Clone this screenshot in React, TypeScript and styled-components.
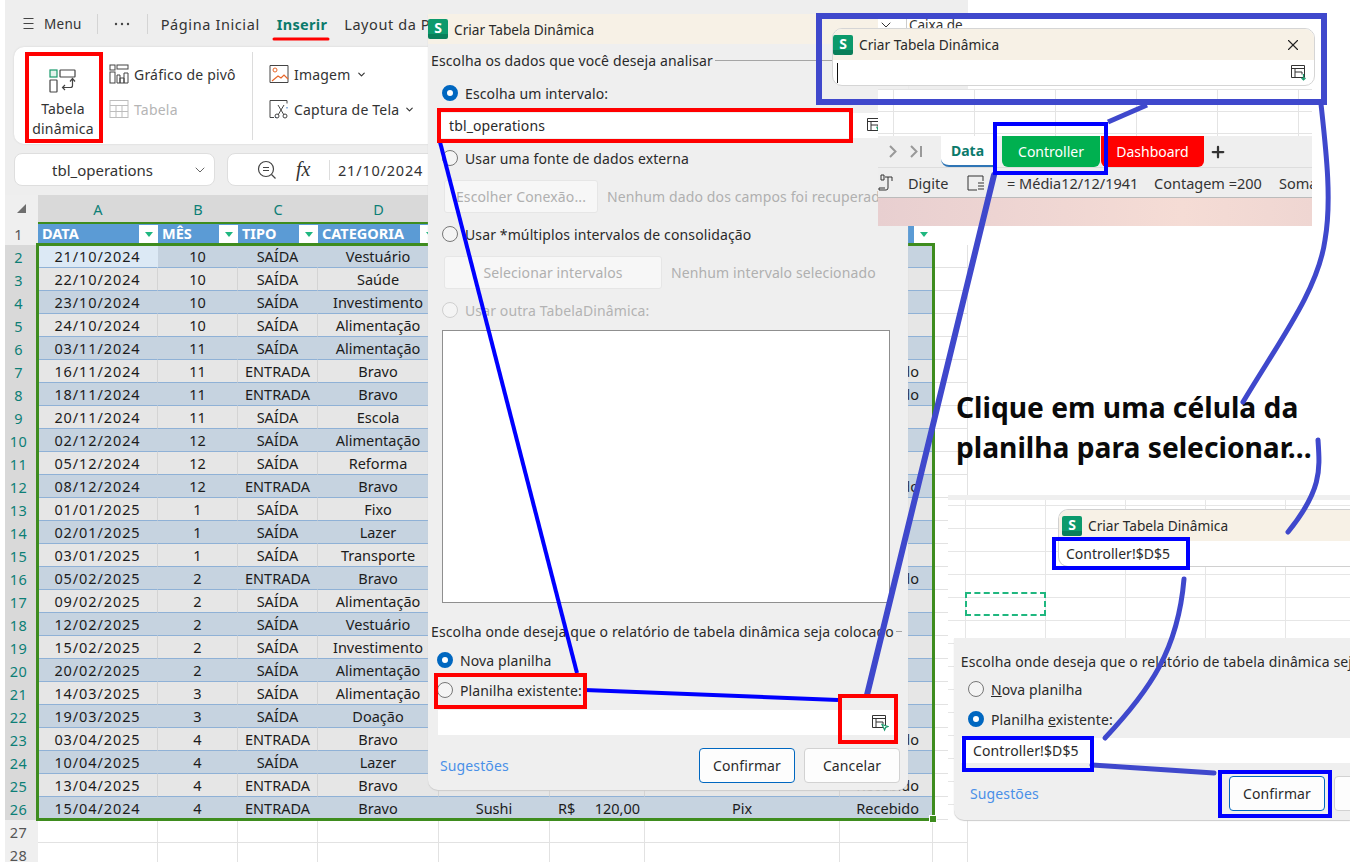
import React from "react";
import styled, { createGlobalStyle } from "styled-components";
import { ChevronDown, Plus, X } from "lucide-react";

const Global = createGlobalStyle`
  html, body { margin: 0; padding: 0; background: #fff; }
  body { font-family: "Noto Sans", "Liberation Sans", sans-serif; color: #222; }
  * { box-sizing: border-box; }
`;

const Canvas = styled.div`
  position: relative;
  width: 1350px;
  height: 862px;
  overflow: hidden;
  background: #fff;
`;

/* ---------- main spreadsheet window ---------- */
const Main = styled.div`
  margin-left: 5px;
  width: 963px;
  height: 862px;
  background: #eeeeee;
  display: flex;
  flex-direction: column;
`;
const Toolbar = styled.div`
  height: 47px;
  padding: 0 0 0 18px;
  display: flex;
  align-items: center;
  font-size: 14.5px;
  letter-spacing: 0.6px;
  color: #333;
  white-space: nowrap;
`;
const MenuLabel = styled.span`
  margin-left: 10px;
  font-size: 13.5px;
  letter-spacing: 0.3px;
`;
const ToolSep = styled.span<{ $l?: number; $r?: number }>`
  width: 1px;
  height: 20px;
  background: #d4d4d4;
  margin: 0 ${(p) => p.$r ?? 15}px 0 ${(p) => p.$l ?? 15}px;
`;
const Tab = styled.span<{ $active?: boolean }>`
  margin-right: 17px;
  font-weight: ${(p) => (p.$active ? 700 : 400)};
  letter-spacing: ${(p) => (p.$active ? "0.3px" : "0.6px")};
  color: ${(p) => (p.$active ? "#0b7a6b" : "#333")};
`;
const Ribbon = styled.div`
  margin-left: 9px;
  width: 500px;
  height: 97px;
  background: #fff;
  border-radius: 10px;
  box-shadow: 0 0 2px #cfcfcf;
  display: flex;
  align-items: stretch;
  padding: 5px 0 4px 10px;
  font-size: 14px;
  letter-spacing: 0.2px;
  color: #333;
`;
const BigButton = styled.div`
  width: 78px;
  display: flex;
  flex-direction: column;
  align-items: center;
  padding-top: 17px;
  line-height: 20px;
  text-align: center;
  svg { margin-bottom: 5px; }
`;
const RibbonCol = styled.div<{ $w: number }>`
  width: ${(p) => p.$w}px;
  padding-left: 7px;
  padding-top: 12px;
  display: flex;
  flex-direction: column;
  gap: 15px;
`;
const RibbonItem = styled.div<{ $off?: boolean }>`
  height: 20px;
  display: flex;
  align-items: center;
  gap: 5px;
  white-space: nowrap;
  color: ${(p) => (p.$off ? "#b5b5b5" : "#333")};
`;
const RibbonSep = styled.div`
  width: 1px;
  background: #dcdcdc;
  margin-right: 9px;
`;
const FormulaRow = styled.div`
  margin: 9px 0 9px 9px;
  height: 33px;
  display: flex;
  gap: 12px;
`;
const NameBox = styled.div`
  width: 201px;
  background: #fff;
  border: 1px solid #dedede;
  border-radius: 8px;
  display: flex;
  align-items: center;
  font-size: 15px;
  padding: 0 6px 0 37px;
  justify-content: space-between;
  color: #333;
`;
const FormulaBox = styled.div`
  flex: 1;
  background: #fff;
  border: 1px solid #dedede;
  border-radius: 8px;
  display: flex;
  align-items: center;
  padding-left: 29px;
  font-size: 14.5px;
  letter-spacing: 0.8px;
  color: #333;
`;
const Fx = styled.span`
  font-family: "Liberation Serif", serif;
  font-style: italic;
  font-size: 20px;
  margin-left: 19px;
  width: 33px;
  letter-spacing: 0;
`;
const FormulaSep = styled.span`
  width: 1px;
  height: 20px;
  background: #ddd;
  margin-right: 8px;
`;

/* ---------- grid ---------- */
const COLS = "33px 120px 80px 80px 121px 111px 95px 195px 93px 35px";
const Sheet = styled.div`
  position: relative;
  flex: 1;
  background: #fff;
  overflow: hidden;
`;
const Row = styled.div<{ $h?: number }>`
  display: grid;
  grid-template-columns: ${COLS};
  height: ${(p) => p.$h ?? 23}px;
`;
const RowNum = styled.div<{ $on?: boolean }>`
  background: ${(p) => (p.$on ? "#d9d9d9" : "#efefef")};
  color: ${(p) => (p.$on ? "#0d7f76" : "#555")};
  display: flex;
  align-items: center;
  justify-content: center;
  font-size: 14.5px;
  letter-spacing: 0.4px;
  padding-right: 6px;
`;
const ColHead = styled.div<{ $off?: boolean }>`
  background: ${(p) => (p.$off ? "#efefef" : "#d9d9d9")};
  color: #0d7f76;
  display: flex;
  align-items: center;
  justify-content: center;
  font-size: 14.5px;
`;
const Corner = styled.div`
  background: #efefef;
  display: flex;
  align-items: center;
  justify-content: center;
`;
const HeadCell = styled.div<{ $plain?: boolean }>`
  position: relative;
  background: ${(p) => (p.$plain ? "#fff" : "#5b9bd5")};
  border-top: ${(p) => (p.$plain ? "1px solid #e2e2e2" : "2px solid #3e8c1e")};
  color: #fff;
  font-weight: 700;
  font-size: 14.5px;
  padding-left: 4px;
  line-height: 19px;
  white-space: nowrap;
`;
const Filter = styled.span`
  position: absolute;
  right: 0;
  top: 1px;
  width: 19px;
  height: 19px;
  background: #fff;
  display: flex;
  align-items: center;
  justify-content: center;
  &::after {
    content: "";
    border-left: 4px solid transparent;
    border-right: 4px solid transparent;
    border-top: 5px solid #1fb77f;
  }
`;
const Cell = styled.div<{ $band?: boolean; $sel?: boolean; $right?: boolean; $free?: boolean }>`
  background: ${(p) =>
    p.$free ? "#fff" : p.$sel ? "#dce9f5" : p.$band ? "#c6d3e0" : "#e6e6e6"};
  border-bottom: 1px solid ${(p) => (p.$free ? "#e2e2e2" : "#8fb1d6")};
  border-right: 1px solid ${(p) => (p.$free ? "#e2e2e2" : p.$band ? "transparent" : "#d4d4d4")};
  display: flex;
  align-items: center;
  justify-content: ${(p) => (p.$right ? "flex-end" : "center")};
  padding-right: ${(p) => (p.$right ? 13 : 0)}px;
  padding-bottom: 1px;
  font-size: 14.5px;
  color: #1c1c1c;
  white-space: nowrap;
  overflow: hidden;
`;
const DateCell = styled(Cell)`
  letter-spacing: 0.9px;
`;
const MoneyCell = styled(Cell)`
  justify-content: space-between;
  padding: 0 4px 1px 8px;
`;
const Selection = styled.div`
  position: absolute;
  left: 31px;
  top: 48px;
  width: 899px;
  height: 578px;
  border: 3px solid #3e8c1e;
  pointer-events: none;
  &::after {
    content: "";
    position: absolute;
    right: -5px;
    bottom: -5px;
    width: 6px;
    height: 6px;
    background: #3e8c1e;
    border: 1px solid #fff;
  }
`;

/* ---------- pivot dialog ---------- */
const Dialog = styled.div`
  position: absolute;
  left: 428px;
  top: 14px;
  width: 480px;
  height: 776px;
  background: #efefef;
  border-radius: 0 0 10px 10px;
  box-shadow: 0 1px 1px #ccc;
  display: flex;
  flex-direction: column;
  font-size: 14px;
  letter-spacing: 0.12px;
  color: #2a2a2a;
  white-space: nowrap;
`;
const TitleBar = styled.div`
  height: 30px;
  background: #f7f1e6;
  display: flex;
  align-items: center;
  gap: 5px;
  font-size: 13.7px;
  letter-spacing: 0;
`;
const Logo = styled.span`
  position: relative;
  flex: none;
  width: 20px;
  height: 20px;
  border-radius: 2px;
  background: linear-gradient(#0c9a6c 75%, #0a7f5a 75%);
  color: #fff;
  font-weight: 700;
  font-size: 14px;
  line-height: 17px;
  text-align: center;
  margin-right: 1px;
`;
const Legend = styled.div<{ $top: number }>`
  margin-top: ${(p) => p.$top}px;
  padding: 0 0 2px 3px;
  height: 20px;
  display: flex;
  align-items: center;
  gap: 2px;
`;
const LegendLine = styled.span`
  flex: 1;
  height: 1px;
  background: #a5a5a5;
  margin-right: 6px;
`;
const RadioRow = styled.div<{ $top: number; $left?: number; $off?: boolean }>`
  margin-top: ${(p) => p.$top}px;
  padding-left: ${(p) => p.$left ?? 14}px;
  height: 20px;
  display: flex;
  align-items: center;
  gap: 7px;
  color: ${(p) => (p.$off ? "#b3b3b3" : "#2a2a2a")};
`;
const Radio = styled.span<{ $on?: boolean; $off?: boolean }>`
  flex: none;
  width: 16px;
  height: 16px;
  border-radius: 50%;
  background: ${(p) => (p.$on ? "#fff" : "#f4f4f4")};
  border: ${(p) =>
    p.$on ? "5px solid #0067c0" : p.$off ? "1px solid #cfcfcf" : "1px solid #777"};
`;
const InputRow = styled.div<{ $top: number; $pr: number }>`
  margin: ${(p) => p.$top}px 0 0 10px;
  height: 25px;
  width: 458px;
  background: #fff;
  display: flex;
  align-items: center;
  justify-content: space-between;
  padding: 0 ${(p) => p.$pr}px 0 11px;
  font-size: 14px;
`;
const DisabledRow = styled.div`
  margin: 12px 0 0 16px;
  height: 33px;
  display: flex;
  align-items: center;
  gap: 9px;
  color: #b0b0b0;
`;
const DisabledBtn = styled.div<{ $w: number }>`
  width: ${(p) => p.$w}px;
  height: 33px;
  background: #f7f7f7;
  border: 1px solid #e6e6e6;
  border-radius: 3px;
  display: flex;
  align-items: center;
  justify-content: center;
  overflow: hidden;
`;
const ListBox = styled.div`
  margin: 10px 0 0 14px;
  width: 448px;
  height: 273px;
  background: #fff;
  border: 1px solid #8f8f8f;
`;
const FooterRow = styled.div`
  margin-top: 13px;
  padding: 0 8px 0 12px;
  display: flex;
  align-items: center;
  gap: 9px;
`;
const Link = styled.span`
  color: #4a90e8;
  flex: 1;
`;
const Btn = styled.div<{ $primary?: boolean }>`
  width: 96px;
  height: 35px;
  background: #fdfdfd;
  border: 1px solid ${(p) => (p.$primary ? "#0067c0" : "#d2d2d2")};
  border-radius: 4px;
  display: flex;
  align-items: center;
  justify-content: center;
`;

/* ---------- pasted clips on the right ---------- */
const CaixaClip = styled.div`
  position: absolute;
  left: 878px;
  top: 15px;
  width: 90px;
  height: 20px;
  background: #fff;
  display: flex;
  align-items: center;
  gap: 12px;
  font-size: 13.5px;
  color: #333;
  overflow: hidden;
  span { border-left: 1px solid #ccc; padding-left: 2px; white-space: nowrap; }
`;
const TabsClip = styled.div`
  position: absolute;
  left: 878px;
  top: 89px;
  width: 434px;
  height: 137px;
  display: flex;
  flex-direction: column;
  overflow: hidden;
`;
const ClipGrid = styled.div`
  height: 47px;
  background-color: #fff;
  background-image:
    linear-gradient(#e4e4e4 1px, transparent 1px),
    linear-gradient(90deg, #e4e4e4 1px, transparent 1px);
  background-size: 81px 22px;
  background-position: 15px 0;
`;
const SheetTabs = styled.div`
  height: 32px;
  background: #efefef;
  display: flex;
  align-items: stretch;
  font-size: 14px;
  border-bottom: 1px solid #ddd;
`;
const NavArrows = styled.div`
  width: 63px;
  padding-left: 11px;
  display: flex;
  align-items: center;
  gap: 13px;
  svg { display: block; }
`;
const DataTab = styled.div`
  width: 53px;
  background: #fff;
  border-radius: 0 0 0 8px;
  font-weight: 700;
  color: #0b7a6b;
  display: flex;
  align-items: center;
  justify-content: center;
  border-bottom: 2px solid #2f75b5;
  margin-right: 8px;
`;
const ColorTab = styled.div<{ $bg: string; $w: number }>`
  width: ${(p) => p.$w}px;
  background: ${(p) => p.$bg};
  color: #fff;
  border-radius: 0 0 6px 6px;
  display: flex;
  align-items: center;
  justify-content: center;
  margin-right: 1px;
`;
const AddTab = styled.div`
  margin-left: 4px;
  display: flex;
  align-items: center;
  color: #333;
`;
const StatusBar = styled.div`
  height: 30px;
  background: #eeeeee;
  border-bottom: 1px solid #bbb;
  display: flex;
  align-items: center;
  font-size: 14.5px;
  color: #333;
  white-space: nowrap;
  svg { flex: none; }
`;
const StatusText = styled.span<{ $w: number }>`
  width: ${(p) => p.$w}px;
  flex: none;
`;
const Blush = styled.div`
  flex: 1;
  background: linear-gradient(90deg, #e8cfd0, #f5dcd5 70%, #efd6d2);
`;
const MiniDialog = styled.div`
  position: absolute;
  left: 832px;
  top: 28px;
  width: 483px;
  height: 58px;
  background: #fff;
  border: 1px solid #d5d5d5;
  border-radius: 10px;
  overflow: hidden;
  display: flex;
  flex-direction: column;
  font-size: 13.7px;
  color: #2a2a2a;
`;
const MiniTitle = styled.div<{ $left: number }>`
  height: 31px;
  flex: none;
  background: #f7f1e6;
  display: flex;
  align-items: center;
  gap: 5px;
  padding: 0 12px 0 ${(p) => p.$left}px;
`;
const MiniSpacer = styled.span`
  flex: 1;
`;
const MiniInput = styled.div`
  flex: 1;
  display: flex;
  align-items: center;
  justify-content: space-between;
  padding: 0 6px 0 4px;
`;
const Caret = styled.span`
  width: 1px;
  height: 20px;
  background: #111;
`;
const BigNote = styled.div`
  position: absolute;
  left: 956px;
  top: 387px;
  width: 380px;
  font-size: 28.2px;
  line-height: 40px;
  font-weight: 700;
  color: #0a0a0a;
  white-space: nowrap;
`;
const LowerClip = styled.div`
  position: absolute;
  left: 948px;
  top: 495px;
  width: 402px;
  height: 325px;
  background-color: #fff;
  background-image:
    linear-gradient(#e6e6e6 1px, transparent 1px),
    linear-gradient(90deg, #e6e6e6 1px, transparent 1px);
  background-size: 80px 23px;
  background-position: 17px 5px;
  border-top: 5px solid #efefef;
`;
const MiniDialogB = styled.div`
  position: absolute;
  left: 110px;
  top: 9px;
  width: 292px;
  height: 58px;
  background: #fff;
  border: 1px solid #d0d0d0;
  border-right: 0;
  border-radius: 10px 0 0 10px;
  overflow: hidden;
  font-size: 13.7px;
  color: #2a2a2a;
`;
const MiniInputB = styled.div`
  height: 25px;
  padding-left: 7px;
  display: flex;
  align-items: center;
  font-size: 14px;
`;
const DashedCell = styled.div`
  position: absolute;
  left: 17px;
  top: 92px;
  width: 81px;
  height: 24px;
  border: 2px dashed #1fb77f;
`;
const LowerDialog = styled.div`
  position: absolute;
  left: 6px;
  top: 138px;
  width: 396px;
  height: 182px;
  background: #efefef;
  border-radius: 0 0 0 10px;
  box-shadow: 0 1px 1px #ccc;
  display: flex;
  flex-direction: column;
  font-size: 14px;
  letter-spacing: 0.12px;
  color: #2a2a2a;
  white-space: nowrap;
  overflow: hidden;
`;
const LowerInput = styled.div`
  margin: 9px 0 0 7px;
  height: 25px;
  background: #fff;
  padding-left: 12px;
  display: flex;
  align-items: center;
`;
const LowerFooter = styled.div`
  margin-top: 13px;
  padding-left: 16px;
  display: flex;
  align-items: center;
  gap: 9px;
  width: 500px;
`;
const LowerLink = styled(Link)`
  flex: none;
  width: 250px;
`;
const Overlay = styled.svg`
  position: absolute;
  left: 0;
  top: 0;
  pointer-events: none;
`;

/* ---------- drawings ---------- */
const RangeIcon = ({ down }: { down?: boolean }) => (
  <svg width="18" height="18" viewBox="0 0 18 18" fill="none">
    <path d="M1.5 1.5h13v12h-13z M1.5 4.5h13 M5 4.5v9 M5 8h7v2.5" stroke="#333" strokeWidth="1" />
    {down ? (
      <path d="M13.5 10v6m-2-2 2 2 2-2" stroke="#1a9a6c" strokeWidth="1.2" />
    ) : (
      <path d="M11 10.5l6 2-2.4 1-1 2.5z" fill="#fff" stroke="#1a9a6c" strokeWidth="1.2" />
    )}
  </svg>
);
const PivotIcon = () => (
  <svg width="28" height="25" viewBox="0 0 28 25" fill="none">
    <rect x="1" y="1" width="7" height="7" stroke="#1a9a6c" strokeWidth="1.2" fill="#e4f3ec" />
    <rect x="11" y="1" width="15" height="7" stroke="#444" strokeWidth="1.2" rx="0.5" />
    <rect x="1" y="11" width="7" height="12" stroke="#444" strokeWidth="1.2" rx="0.5" />
    <path d="M23.5 10v6.5a2 2 0 0 1-2 2h-7.5" stroke="#444" strokeWidth="1.2" />
    <path d="M21 12.5l2.5-3 2.5 3M16 16l-2.5 2.5L16 21" stroke="#444" strokeWidth="1.2" />
  </svg>
);
const ChartPivotIcon = () => (
  <svg width="20" height="20" viewBox="0 0 20 20" fill="none" stroke="#444">
    <rect x="1" y="1" width="5" height="5" />
    <rect x="8" y="1" width="11" height="4" />
    <rect x="1" y="8" width="5" height="11" />
    <path d="M8 19v-8h3v8M11 19v-5h4v5M15 19V9h4v10M8 19h11" />
  </svg>
);
const TableIcon = () => (
  <svg width="20" height="20" viewBox="0 0 20 20" fill="none" stroke="#bdbdbd">
    <rect x="1" y="1.5" width="18" height="17" />
    <path d="M1 6.5h18M1 12.5h18M7 7v11M13 7v11" />
  </svg>
);
const ImageIcon = () => (
  <svg width="20" height="20" viewBox="0 0 20 20" fill="none">
    <path d="M1 18.5v-17h18v17" stroke="#444" />
    <path d="M1 18.5h18" stroke="#444" />
    <path d="M3 17l6-5 3 2 3-3 4 4" stroke="#e8672a" strokeWidth="1.2" />
    <circle cx="6" cy="6" r="2" stroke="#e8672a" />
  </svg>
);
const CaptureIcon = () => (
  <svg width="20" height="20" viewBox="0 0 20 20" fill="none">
    <path d="M5 18.5H1v-17h17v3" stroke="#444" />
    <path d="M18 8v3M6 18.5h2" stroke="#2a6fc0" strokeDasharray="1.5 1.5" />
    <path d="M15 6l-6 10M9 6l6 10" stroke="#444" />
    <circle cx="8" cy="17" r="2" stroke="#444" />
    <circle cx="16" cy="17" r="2" stroke="#444" />
  </svg>
);
const HamburgerIcon = () => (
  <svg width="11" height="13" viewBox="0 0 11 13" stroke="#444">
    <path d="M0.5 1.5h10M0.5 6.5h10M0.5 11.5h10" />
  </svg>
);
const ZoomIcon = () => (
  <svg width="20" height="20" viewBox="0 0 20 20" fill="none" stroke="#444" strokeWidth="1.2">
    <circle cx="9" cy="9" r="7.5" />
    <path d="M6 7.5h6M6 10.5h6M14.5 14.5l4 4" />
  </svg>
);
const CornerTriangle = () => (
  <svg width="9" height="9" viewBox="0 0 9 9">
    <path d="M9 0v9H0z" fill="#6e6e6e" />
  </svg>
);
const ChevronRightIcon = () => (
  <svg width="8" height="13" viewBox="0 0 8 13" fill="none" stroke="#999" strokeWidth="2">
    <path d="M1 1l5.5 5.5L1 12" />
  </svg>
);
const ChevronLastIcon = () => (
  <svg width="12" height="13" viewBox="0 0 12 13" fill="none" stroke="#999" strokeWidth="2">
    <path d="M1 1l5.5 5.5L1 12M11 1v11" />
  </svg>
);
const StatusGapA = styled.svg`
  margin-right: 15px;
`;
const StatusGapB = styled.svg`
  margin-right: 22px;
`;
const StatusIconA = () => (
  <StatusGapA width="15" height="18" viewBox="0 0 15 18" fill="none" stroke="#333">
    <path d="M1 16h7a2 2 0 0 0 2-2V3h4v4M1 16v-2h6M6 1H3v5h3zM10 3H7" />
  </StatusGapA>
);
const StatusIconB = () => (
  <StatusGapB width="18" height="16" viewBox="0 0 18 16" fill="none" stroke="#333">
    <path d="M10 15H1V1h15v5M11 8h6M11 11h6M11 14h6" />
  </StatusGapB>
);

const data: [string, string, string, string][] = [
  ["21/10/2024", "10", "SAÍDA", "Vestuário"],
  ["22/10/2024", "10", "SAÍDA", "Saúde"],
  ["23/10/2024", "10", "SAÍDA", "Investimento"],
  ["24/10/2024", "10", "SAÍDA", "Alimentação"],
  ["03/11/2024", "11", "SAÍDA", "Alimentação"],
  ["16/11/2024", "11", "ENTRADA", "Bravo"],
  ["18/11/2024", "11", "ENTRADA", "Bravo"],
  ["20/11/2024", "11", "SAÍDA", "Escola"],
  ["02/12/2024", "12", "SAÍDA", "Alimentação"],
  ["05/12/2024", "12", "SAÍDA", "Reforma"],
  ["08/12/2024", "12", "ENTRADA", "Bravo"],
  ["01/01/2025", "1", "SAÍDA", "Fixo"],
  ["02/01/2025", "1", "SAÍDA", "Lazer"],
  ["03/01/2025", "1", "SAÍDA", "Transporte"],
  ["05/02/2025", "2", "ENTRADA", "Bravo"],
  ["09/02/2025", "2", "SAÍDA", "Alimentação"],
  ["12/02/2025", "2", "SAÍDA", "Vestuário"],
  ["15/02/2025", "2", "SAÍDA", "Investimento"],
  ["20/02/2025", "2", "SAÍDA", "Alimentação"],
  ["14/03/2025", "3", "SAÍDA", "Alimentação"],
  ["19/03/2025", "3", "SAÍDA", "Doação"],
  ["03/04/2025", "4", "ENTRADA", "Bravo"],
  ["10/04/2025", "4", "SAÍDA", "Lazer"],
  ["13/04/2025", "4", "ENTRADA", "Bravo"],
  ["15/04/2024", "4", "ENTRADA", "Bravo"],
];

const heads = ["DATA", "MÊS", "TIPO", "CATEGORIA", "", "", "", ""];
const letters = ["A", "B", "C", "D", "", "", "", "", ""];

const RED = "#ff0000";
const BLUE = "#0000ff";
const INDIGO = "#3f48cc";

export default function App() {
  return (
    <Canvas>
      <Global />
      <Main>
        <Toolbar>
          <HamburgerIcon />
          <MenuLabel>Menu</MenuLabel>
          <ToolSep />
          <svg width="18" height="4" viewBox="0 0 18 4" fill="#444">
            <circle cx="3" cy="2" r="1.2" />
            <circle cx="9" cy="2" r="1.2" />
            <circle cx="15" cy="2" r="1.2" />
          </svg>
          <ToolSep $l={16} $r={13} />
          <Tab>Página Inicial</Tab>
          <Tab $active>Inserir</Tab>
          <Tab>Layout da Página</Tab>
        </Toolbar>
        <Ribbon>
          <BigButton>
            <PivotIcon />
            Tabela
            <br />
            dinâmica
          </BigButton>
          <RibbonCol $w={150}>
            <RibbonItem>
              <ChartPivotIcon />
              Gráfico de pivô
            </RibbonItem>
            <RibbonItem $off>
              <TableIcon />
              Tabela
            </RibbonItem>
          </RibbonCol>
          <RibbonSep />
          <RibbonCol $w={200}>
            <RibbonItem>
              <ImageIcon />
              Imagem
              <ChevronDown size={11} strokeWidth={2.5} />
            </RibbonItem>
            <RibbonItem>
              <CaptureIcon />
              Captura de Tela
              <ChevronDown size={11} strokeWidth={2.5} />
            </RibbonItem>
          </RibbonCol>
        </Ribbon>
        <FormulaRow>
          <NameBox>
            tbl_operations
            <ChevronDown size={16} color="#666" strokeWidth={1.5} />
          </NameBox>
          <FormulaBox>
            <ZoomIcon />
            <Fx>fx</Fx>
            <FormulaSep />
            21/10/2024
          </FormulaBox>
        </FormulaRow>
        <Sheet>
          <Row $h={27}>
            <Corner>
              <CornerTriangle />
            </Corner>
            {letters.map((l, i) => (
              <ColHead key={i} $off={i === 8}>
                {l}
              </ColHead>
            ))}
          </Row>
          <Row>
            <RowNum>1</RowNum>
            {heads.map((h, i) => (
              <HeadCell key={i}>
                {h}
                <Filter />
              </HeadCell>
            ))}
            <HeadCell $plain />
          </Row>
          {data.map((r, i) => {
            const band = i % 2 === 0;
            const last = i === data.length - 1;
            return (
              <Row key={i}>
                <RowNum $on>{i + 2}</RowNum>
                <DateCell $band={band} $sel={i === 0}>
                  {r[0]}
                </DateCell>
                <Cell $band={band}>{r[1]}</Cell>
                <Cell $band={band}>{r[2]}</Cell>
                <Cell $band={band}>{r[3]}</Cell>
                <Cell $band={band}>{last ? "Sushi" : ""}</Cell>
                {last ? (
                  <MoneyCell $band={band}>
                    <span>R$</span>
                    <span>120,00</span>
                  </MoneyCell>
                ) : (
                  <Cell $band={band} />
                )}
                <Cell $band={band}>{last ? "Pix" : ""}</Cell>
                <Cell $band={band} $right>
                  {r[2] === "ENTRADA" ? "Recebido" : ""}
                </Cell>
                <Cell $free />
              </Row>
            );
          })}
          {[27, 28].map((n) => (
            <Row key={n}>
              <RowNum>{n}</RowNum>
              {Array.from({ length: 9 }).map((_, i) => (
                <Cell key={i} $free />
              ))}
            </Row>
          ))}
          <Selection />
        </Sheet>
      </Main>

      <Dialog>
        <TitleBar>
          <Logo>S</Logo>
          Criar Tabela Dinâmica
        </TitleBar>
        <Legend $top={7}>
          Escolha os dados que você deseja analisar
          <LegendLine />
        </Legend>
        <RadioRow $top={12}>
          <Radio $on />
          Escolha um intervalo:
        </RadioRow>
        <InputRow $top={10} $pr={12}>
          tbl_operations
          <RangeIcon />
        </InputRow>
        <RadioRow $top={10}>
          <Radio />
          Usar uma fonte de dados externa
        </RadioRow>
        <DisabledRow>
          <DisabledBtn $w={154}>Escolher Conexão...</DisabledBtn>
          Nenhum dado dos campos foi recuperado
        </DisabledRow>
        <RadioRow $top={11}>
          <Radio />
          Usar *múltiplos intervalos de consolidação
        </RadioRow>
        <DisabledRow>
          <DisabledBtn $w={218}>Selecionar intervalos</DisabledBtn>
          Nenhum intervalo selecionado
        </DisabledRow>
        <RadioRow $top={11} $off>
          <Radio $off />
          Usar outra TabelaDinâmica:
        </RadioRow>
        <ListBox />
        <Legend $top={19}>
          Escolha onde deseja que o relatório de tabela dinâmica seja colocado
          <LegendLine />
        </Legend>
        <RadioRow $top={8} $left={9}>
          <Radio $on />
          Nova planilha
        </RadioRow>
        <RadioRow $top={10} $left={9}>
          <Radio />
          Planilha existente:
        </RadioRow>
        <InputRow $top={10} $pr={7}>
          <span />
          <RangeIcon />
        </InputRow>
        <FooterRow>
          <Link>Sugestões</Link>
          <Btn $primary>Confirmar</Btn>
          <Btn>Cancelar</Btn>
        </FooterRow>
      </Dialog>

      <CaixaClip>
        <ChevronDown size={16} strokeWidth={1.5} />
        <span>Caixa de</span>
      </CaixaClip>

      <TabsClip>
        <ClipGrid />
        <SheetTabs>
          <NavArrows>
            <ChevronRightIcon />
            <ChevronLastIcon />
          </NavArrows>
          <DataTab>Data</DataTab>
          <ColorTab $bg="#00b050" $w={98}>
            Controller
          </ColorTab>
          <ColorTab $bg="#ff0000" $w={103}>
            Dashboard
          </ColorTab>
          <AddTab>
            <Plus size={18} strokeWidth={3} />
          </AddTab>
        </SheetTabs>
        <StatusBar>
          <StatusIconA />
          <StatusText $w={59}>Digite</StatusText>
          <StatusIconB />
          <StatusText $w={147}>= Média12/12/1941</StatusText>
          <StatusText $w={125}>Contagem =200</StatusText>
          <StatusText $w={60}>Soma=0</StatusText>
        </StatusBar>
        <Blush />
      </TabsClip>

      <MiniDialog>
        <MiniTitle $left={0}>
          <Logo>S</Logo>
          Criar Tabela Dinâmica
          <MiniSpacer />
          <X size={18} strokeWidth={1.5} color="#222" />
        </MiniTitle>
        <MiniInput>
          <Caret />
          <RangeIcon down />
        </MiniInput>
      </MiniDialog>

      <BigNote>
        Clique em uma célula da
        <br />
        planilha para selecionar...
      </BigNote>

      <LowerClip>
        <MiniDialogB>
          <MiniTitle $left={3}>
            <Logo>S</Logo>
            Criar Tabela Dinâmica
          </MiniTitle>
          <MiniInputB>Controller!$D$5</MiniInputB>
        </MiniDialogB>
        <DashedCell />
        <LowerDialog>
          <Legend $top={14}>
            &nbsp;Escolha onde deseja que o relatório de tabela dinâmica seja colocado
          </Legend>
          <RadioRow $top={7} $left={14}>
            <Radio />
            <span>
              <u>N</u>ova planilha
            </span>
          </RadioRow>
          <RadioRow $top={10} $left={14}>
            <Radio $on />
            <span>
              Planilha <u>e</u>xistente:
            </span>
          </RadioRow>
          <LowerInput>Controller!$D$5</LowerInput>
          <LowerFooter>
            <LowerLink>Sugestões</LowerLink>
            <Btn $primary>Confirmar</Btn>
            <Btn>Cancelar</Btn>
          </LowerFooter>
        </LowerDialog>
      </LowerClip>

      <Overlay width="1350" height="862" viewBox="0 0 1350 862" fill="none">
        <path d="M440 142L577 673" stroke={BLUE} strokeWidth="4" />
        <path d="M585 690L838 700" stroke={BLUE} strokeWidth="4" />
        <path d="M994 175L867 695" stroke={INDIGO} strokeWidth="6" strokeLinecap="round" />
        <path d="M1147 105L1108 122" stroke={INDIGO} strokeWidth="5" />
        <path d="M1321 104C1326 150 1332 200 1325 240C1318 290 1280 340 1243 402" stroke={INDIGO} strokeWidth="5" strokeLinecap="round" />
        <path d="M1318 440C1320 470 1322 490 1288 532" stroke={INDIGO} strokeWidth="5" strokeLinecap="round" />
        <path d="M1184 579C1178 650 1150 690 1105 738" stroke={INDIGO} strokeWidth="5" strokeLinecap="round" />
        <path d="M1092 765L1214 773" stroke={INDIGO} strokeWidth="5" strokeLinecap="round" />
        <rect x="27" y="54" width="74" height="87" stroke={RED} strokeWidth="4" />
        <path d="M274 39H328" stroke={RED} strokeWidth="3" strokeLinecap="round" />
        <rect x="439" y="110" width="412" height="31" stroke={RED} strokeWidth="4" />
        <rect x="436" y="675" width="149" height="32" stroke={RED} strokeWidth="4" />
        <rect x="840" y="696" width="56" height="46" stroke={RED} strokeWidth="4" />
        <rect x="819" y="16" width="505" height="86" stroke={INDIGO} strokeWidth="6" />
        <rect x="995" y="124" width="111" height="49" stroke={BLUE} strokeWidth="4" />
        <rect x="1054" y="539" width="134" height="29" stroke={BLUE} strokeWidth="4" />
        <rect x="964" y="738" width="128" height="32" stroke={BLUE} strokeWidth="4" />
        <rect x="1220" y="772" width="110" height="44" stroke={BLUE} strokeWidth="4" />
      </Overlay>
    </Canvas>
  );
}
